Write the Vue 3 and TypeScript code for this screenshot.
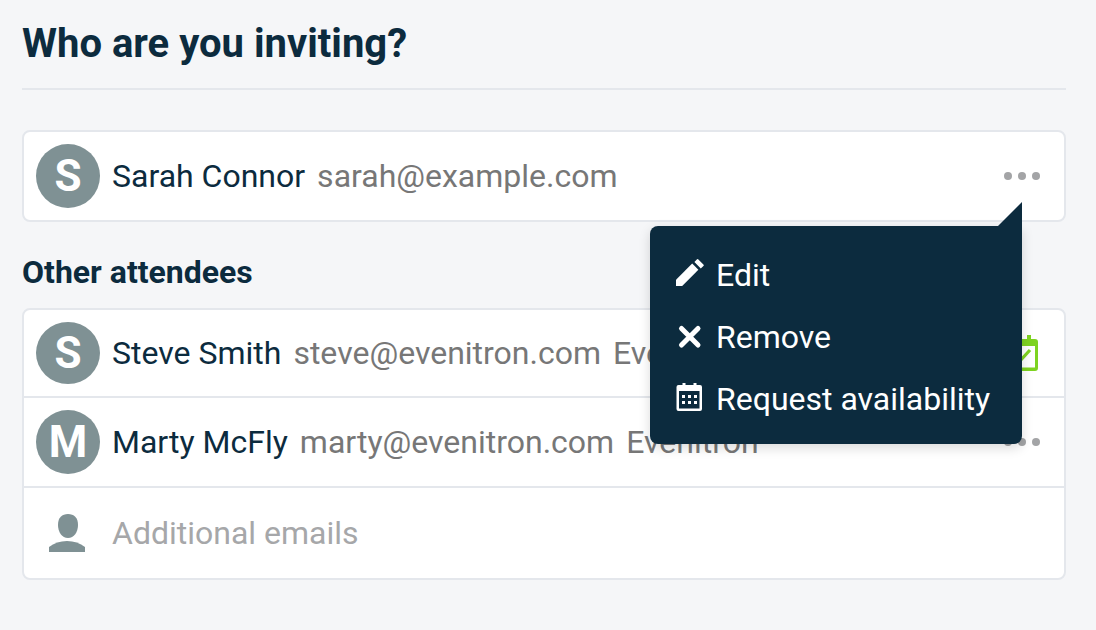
<script setup lang="ts">
import { ref } from 'vue'

interface Attendee {
  name: string
  email: string
  company?: string
  available?: boolean
}

const organizer: Attendee = { name: 'Sarah Connor', email: 'sarah@example.com' }

const attendees: Attendee[] = [
  { name: 'Steve Smith', email: 'steve@evenitron.com', company: 'Evenitron', available: true },
  { name: 'Marty McFly', email: 'marty@evenitron.com', company: 'Evenitron' },
]

const menuOpen = ref(true)
const extraEmails = ref('')
</script>

<template>
  <main class="page">
    <h1 class="title">Who are you inviting?</h1>

    <section class="card">
      <div class="row">
        <span class="avatar">{{ organizer.name[0] }}</span>
        <span class="name">{{ organizer.name }}</span>
        <span class="detail">{{ organizer.email }}</span>
        <div class="actions">
          <button
            class="more"
            type="button"
            aria-label="Options"
            :aria-expanded="menuOpen"
            @click="menuOpen = !menuOpen"
          >
            <svg width="36" height="8" viewBox="0 0 36 8" aria-hidden="true">
              <circle cx="4" cy="4" r="4" />
              <circle cx="18" cy="4" r="4" />
              <circle cx="32" cy="4" r="4" />
            </svg>
          </button>
          <div v-if="menuOpen" class="menu">
            <button class="menu-item" type="button">
              <svg width="28" height="28" viewBox="0 0 28 28" fill="#fff" aria-hidden="true">
                <path d="M0 27v-6.200L16.200 4.600l6.200 6.200L6.200 27z" />
                <path d="M18.400 2.900 20.800.5q.8-.8 1.600 0l5 5q.8.8 0 1.600l-2.600 2.400z" />
              </svg>
              <span class="menu-label">Edit</span>
            </button>
            <button class="menu-item" type="button">
              <svg width="28" height="28" viewBox="0 0 28 28" aria-hidden="true">
                <path d="M5.500 7.500 22 24M22 7.500 5.500 24" stroke="#fff" stroke-width="5" stroke-linecap="round" />
              </svg>
              <span class="menu-label">Remove</span>
            </button>
            <button class="menu-item" type="button">
              <svg width="28" height="28" viewBox="0 0 28 28" fill="#fff" aria-hidden="true">
                <path
                  fill-rule="evenodd"
                  d="M6.500 0h3v2h8V0h3v2H24q2 0 2 2v22q0 2-2 2H2.500q-2 0-2-2V4q0-2 2-2h4zM3 8v17.500h20.500V8z"
                />
                <path d="M6 12h3v3H6zm6 0h3v3h-3zm6 0h3v3h-3zM6 18h3v3H6zm6 0h3v3h-3zm6 0h3v3h-3z" />
              </svg>
              <span class="menu-label">Request availability</span>
            </button>
          </div>
        </div>
      </div>
    </section>

    <h2 class="subtitle">Other attendees</h2>

    <section class="card attendees">
      <div v-for="person in attendees" :key="person.email" class="row">
        <span class="avatar">{{ person.name[0] }}</span>
        <span class="name">{{ person.name }}</span>
        <span class="detail">{{ person.email }}</span>
        <span class="detail">{{ person.company }}</span>
        <div class="actions">
          <svg v-if="person.available" class="available" width="32" height="36" viewBox="0 0 32 36" aria-hidden="true">
            <path
              fill="#7ed321"
              fill-rule="evenodd"
              d="M7 0h4v4h10V0h4v4h4q3 0 3 3v26q0 3-3 3H3q-3 0-3-3V7q0-3 3-3h4zM3 11v21.500h26V11z"
            />
            <path d="M7.500 22.500 12 28 24 15" fill="none" stroke="#7ed321" stroke-width="3.200" />
          </svg>
          <button v-else class="more" type="button" aria-label="Options">
            <svg width="36" height="8" viewBox="0 0 36 8" aria-hidden="true">
              <circle cx="4" cy="4" r="4" />
              <circle cx="18" cy="4" r="4" />
              <circle cx="32" cy="4" r="4" />
            </svg>
          </button>
        </div>
      </div>
      <label class="row row-input">
        <span class="person">
          <svg width="38" height="40" viewBox="0 0 38 40" fill="#7f9194" aria-hidden="true">
            <path d="M19 1c6 0 10 4 10 10.500 0 8-4 13.500-10 13.500S9 19.500 9 11.500C9 5 13 1 19 1z" />
            <path d="M0 39v-5c5-4 11-6 18-6s13 2 18 6v5z" />
          </svg>
        </span>
        <input v-model="extraEmails" class="input" type="text" placeholder="Additional emails" aria-label="Additional emails" />
      </label>
    </section>
  </main>
</template>

<style>
body {
  background: #f5f6f8;
}
</style>

<style scoped>
.page {
  padding: 16px 30px 50px 22px;
  font-family: Roboto, "Liberation Sans", sans-serif;
  font-size: 32px;
  line-height: 40px;
  color: #0c2b3e;
}

.title {
  margin: 0 0 40px;
  padding-bottom: 16px;
  border-bottom: 2px solid #e4e7ec;
  font-size: 40px;
  line-height: 56px;
  font-weight: 700;
}

.subtitle {
  margin: 30px 0 16px;
  font-size: 32px;
  line-height: 40px;
  font-weight: 700;
}

.card {
  border: 2px solid #e4e7ec;
  border-radius: 8px;
  background: #fff;
}

.row {
  display: flex;
  align-items: center;
  gap: 12px;
  box-sizing: border-box;
  min-height: 88px;
  padding: 12px 24px 12px 12px;
  white-space: nowrap;
}

.row + .row {
  border-top: 2px solid #e4e7ec;
}

.attendees .row:first-child {
  min-height: 86px;
}

.attendees .row:first-child .avatar {
  height: 62px;
  line-height: 62px;
}

.attendees .row-input {
  min-height: 92px;
}

.avatar {
  flex: none;
  width: 64px;
  height: 64px;
  border-radius: 50%;
  background: #7f9194;
  color: #fff;
  font-size: 44px;
  line-height: 64px;
  font-weight: 700;
  text-align: center;
}

.detail {
  color: #777;
}

.actions {
  position: relative;
  display: flex;
  margin-left: auto;
}

.available {
  margin-right: 2px;
}

.more {
  display: flex;
  padding: 0;
  border: 0;
  background: none;
  fill: #a3a4a6;
  cursor: pointer;
}

.menu {
  position: absolute;
  z-index: 1;
  top: 54px;
  right: 50%;
  box-sizing: border-box;
  min-width: 372px;
  padding: 16px 26px;
  border-radius: 8px 0 8px 8px;
  background: #0c2b3e;
  box-shadow: 0 4px 12px rgba(0, 0, 0, 0.15);
}

.menu::before {
  content: "";
  position: absolute;
  right: 0;
  bottom: 100%;
  width: 24px;
  height: 24px;
  background: #0c2b3e;
  clip-path: polygon(100% 0, 100% 100%, 0 100%);
}

.menu-item {
  display: flex;
  align-items: center;
  gap: 12px;
  width: 100%;
  height: 62px;
  padding: 0;
  border: 0;
  background: none;
  color: #fff;
  font: inherit;
  cursor: pointer;
}

.menu-label {
  padding-top: 4px;
}

.person {
  display: flex;
  flex: none;
  justify-content: center;
  width: 64px;
}

.input {
  flex: 1;
  min-width: 0;
  padding: 0;
  border: 0;
  outline: 0;
  background: none;
  color: #0c2b3e;
  font: inherit;
}

.input::placeholder {
  color: #a6a7a9;
  opacity: 1;
}
</style>
